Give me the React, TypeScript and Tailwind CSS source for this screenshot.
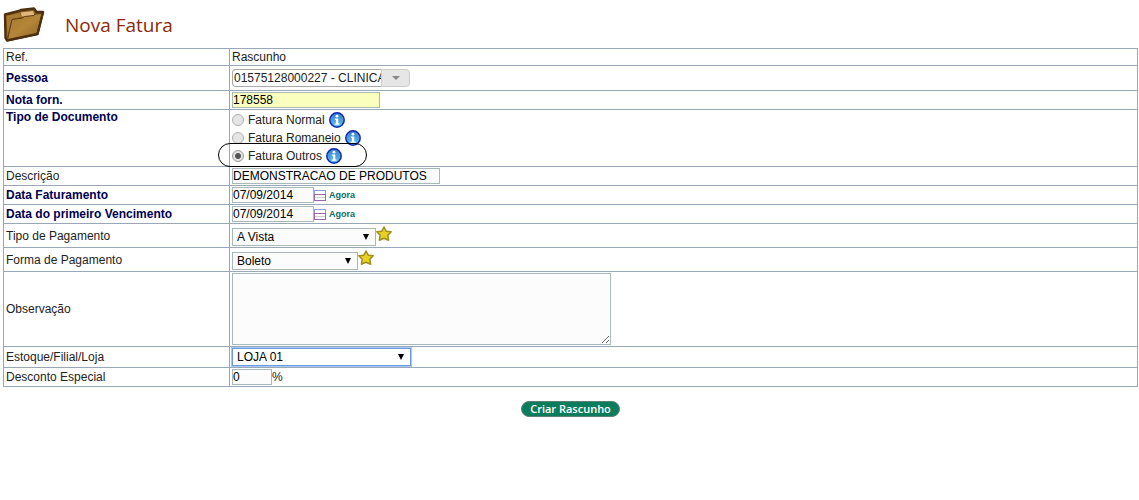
import { useState } from 'react'
import type { ReactNode } from 'react'

const inputClass =
  'block h-4 border border-[#a9b8b8] bg-[#fcfcfc] text-[12px] leading-[14px] text-black outline-none'

function FolderIcon() {
  return (
    <svg width="42" height="36" viewBox="0 0 42 36" className="block shrink-0" aria-hidden="true">
      <defs>
        <linearGradient id="folder" x1="0" y1="0" x2="1" y2="1">
          <stop offset="0" stopColor="#a37a30" />
          <stop offset="0.5" stopColor="#b38639" />
          <stop offset="1" stopColor="#8f6424" />
        </linearGradient>
      </defs>
      <path d="M2 7.5 L16 4 L18 3 L31 1.5 L33.5 5 L40 5 L34.5 27 L4 33.5 L2.5 31 Z" fill="#8a5f22" stroke="#4e2f0f" strokeWidth="2.4" strokeLinejoin="round" />
      <path d="M17.5 5.5 L30 4 L31.5 8 L30 9 L19 9.5 Z" fill="#e2b77c" />
      <path d="M3.5 9 L16 6 L19 9.5 L9 12 L4.5 29 Z" fill="#a87a32" />
      <path d="M9 12.5 L19.5 11 L21.5 9.5 L31 8.5 L32 7 L39 6.5 L34 26.5 L4.5 32.5 Z" fill="url(#folder)" stroke="#5c3a14" strokeWidth="1" strokeLinejoin="round" />
      <path d="M4 33.5 L34.5 27 L40 5" fill="none" stroke="#4e2f0f" strokeWidth="2.2" strokeLinejoin="round" />
    </svg>
  )
}

function InfoIcon() {
  return (
    <svg width="16" height="16" viewBox="0 0 16 16" className="block shrink-0" aria-hidden="true">
      <defs>
        <linearGradient id="info" x1="0" y1="0" x2="0" y2="1">
          <stop offset="0" stopColor="#3b7fc8" />
          <stop offset="1" stopColor="#5cc0ee" />
        </linearGradient>
      </defs>
      <circle cx="8" cy="8" r="7.2" fill="url(#info)" stroke="#1226b4" strokeWidth="1.5" />
      <circle cx="8" cy="4.2" r="1.4" fill="#fff" />
      <path d="M5.8 6.4 H9.3 V11.4 H10.6 V12.8 H5.6 V11.4 H6.9 V7.8 H5.8 Z" fill="#fff" />
    </svg>
  )
}

function StarIcon() {
  return (
    <svg width="16" height="16" viewBox="0 0 16 16" className="block" aria-hidden="true">
      <path
        d="M8 1 L10.2 5.2 L15.2 5.8 L11.8 9.3 L12.6 14.2 L8 12.2 L3.4 14.2 L4.2 9.3 L0.8 5.8 L5.8 5.2 Z"
        fill="#e6d321"
        stroke="#a08c20"
        strokeWidth="1.5"
        strokeLinejoin="round"
      />
    </svg>
  )
}

function CalendarIcon() {
  return (
    <svg width="12" height="12" viewBox="0 0 12 12" className="block" shapeRendering="crispEdges" aria-hidden="true">
      <rect x="0" y="1" width="12" height="10" fill="#fff" />
      <path d="M0 1.5 H12 M0.5 1 V5 M11.5 1 V5" stroke="#8f9fe0" />
      <path d="M1 8.5 H11" stroke="#d3cbd0" />
      <path d="M0 5.5 H12 M0 11.5 H12 M0.5 5 V12 M11.5 5 V12" stroke="#9a68aa" />
    </svg>
  )
}

type RowProps = {
  label: string
  htmlFor?: string
  required?: boolean
  top?: boolean
  height: string
  children: ReactNode
}

function Row({ label, htmlFor, required, top, height, children }: RowProps) {
  return (
    <tr className={height}>
      <th
        scope="row"
        className={`w-[226px] border border-[#98a8b8] p-0 pl-0.5 text-left ${
          top ? 'align-top' : 'align-middle'
        } ${required ? 'font-bold text-[#000050]' : 'font-normal text-[#222]'}`}
      >
        {htmlFor ? <label htmlFor={htmlFor}>{label}</label> : label}
      </th>
      <td className="border border-[#98a8b8] p-0 pl-0.5 align-middle">{children}</td>
    </tr>
  )
}

type SelectProps = {
  id: string
  width: string
  options: string[]
  focused?: boolean
}

function Select({ id, width, options, focused }: SelectProps) {
  return (
    <div className={`relative ${width}`}>
      <select
        id={id}
        className={`block h-[18px] w-full appearance-none border pl-1 text-[12px] leading-4 text-black outline-none ${
          focused
            ? 'border-[#6a9ae0] bg-white ring-1 ring-[#a9c8f5]'
            : 'border-[#a9b8b8] bg-[#fcfcfc]'
        }`}
      >
        {options.map(option => (
          <option key={option}>{option}</option>
        ))}
      </select>
      <svg width="6" height="6" viewBox="0 0 6 6" className="pointer-events-none absolute top-1.5 right-[7px]" aria-hidden="true">
        <path d="M0 0 H6 L3 6 Z" fill="#000" />
      </svg>
    </div>
  )
}

function DateField({ id }: { id: string }) {
  const [value, setValue] = useState('07/09/2014')
  return (
    <div className="flex items-center">
      <input id={id} type="text" value={value} onChange={e => setValue(e.target.value)} className={`${inputClass} w-[82px]`} />
      <button type="button" aria-label="Calendário">
        <CalendarIcon />
      </button>
      <a href="#agora" className="ml-[3px] text-[9px] leading-3 font-bold text-[#0b6b5f]">
        Agora
      </a>
    </div>
  )
}

const documentTypes = ['Fatura Normal', 'Fatura Romaneio', 'Fatura Outros']

export default function App() {
  const [documentType, setDocumentType] = useState('Fatura Outros')

  return (
    <main className="min-h-screen bg-white pr-px pl-[3px] font-['Liberation_Sans',Arial,sans-serif] text-[12px] leading-[14px] text-[#222]">
      <header className="flex h-12 items-center gap-5 pt-0.5">
        <FolderIcon />
        <h1 className="font-['Trebuchet_MS','Open_Sans',sans-serif] text-[19px] leading-6 text-[#8b2a08]">Nova Fatura</h1>
      </header>

      <form onSubmit={e => e.preventDefault()}>
        <table className="w-full table-fixed border-collapse">
          <tbody>
            <Row label="Ref." height="h-[17px]">
              Rascunho
            </Row>
            <Row label="Pessoa" htmlFor="pessoa" required height="h-[25px]">
              <div className="flex h-[18px] w-[178px]">
                <input
                  id="pessoa"
                  type="text"
                  defaultValue="01575128000227 - CLINICA"
                  className="h-full w-[149px] rounded-l border border-r-0 border-[#aaa] bg-white pl-px text-[12px] text-[#222] outline-none"
                />
                <button
                  type="button"
                  aria-label="Abrir lista"
                  className="flex h-full flex-1 items-center justify-center rounded-r border border-[#ccc] bg-[#e6e6e6]"
                >
                  <svg width="8" height="4" viewBox="0 0 8 4" aria-hidden="true">
                    <path d="M0 0 H8 L4 4 Z" fill="#888" />
                  </svg>
                </button>
              </div>
            </Row>
            <Row label="Nota forn." htmlFor="nota" required height="h-[19px]">
              <input
                id="nota"
                type="text"
                defaultValue="178558"
                className="block h-4 w-[148px] border border-[#a9b8b8] bg-[#faffbd] text-[12px] leading-[14px] text-black outline-none"
              />
            </Row>
            <Row label="Tipo de Documento" required top height="h-[57px]">
              <div className="relative">
                {documentTypes.map(type => (
                  <div key={type} className="flex h-[18px] items-center gap-1">
                    <label className="flex items-center gap-1">
                      <input
                        type="radio"
                        name="tipo-documento"
                        checked={documentType === type}
                        onChange={() => setDocumentType(type)}
                        className="size-3 appearance-none rounded-full border border-[#b0b0b0] bg-[#e4e4e4] checked:border-[#999] checked:bg-[radial-gradient(circle,#555_0_2.5px,#e4e4e4_3.5px)]"
                      />
                      {type}
                    </label>
                    <InfoIcon />
                  </div>
                ))}
                <div className="pointer-events-none absolute -bottom-0.5 -left-3.5 h-6 w-[149px] rounded-xl border border-black" />
              </div>
            </Row>
            <Row label="Descrição" htmlFor="descricao" height="h-[19px]">
              <input id="descricao" type="text" defaultValue="DEMONSTRACAO DE PRODUTOS" className={`${inputClass} w-[208px]`} />
            </Row>
            <Row label="Data Faturamento" htmlFor="data-faturamento" required height="h-[19px]">
              <DateField id="data-faturamento" />
            </Row>
            <Row label="Data do primeiro Vencimento" htmlFor="data-vencimento" required height="h-[19px]">
              <DateField id="data-vencimento" />
            </Row>
            <Row label="Tipo de Pagamento" htmlFor="tipo-pagamento" height="h-[24px]">
              <div className="flex h-5 items-start">
                <div className="self-end">
                  <Select id="tipo-pagamento" width="w-[144px]" options={['A Vista', 'A Prazo']} />
                </div>
                <StarIcon />
              </div>
            </Row>
            <Row label="Forma de Pagamento" htmlFor="forma-pagamento" height="h-[24px]">
              <div className="flex h-5 items-start">
                <div className="self-end">
                  <Select id="forma-pagamento" width="w-[126px]" options={['Boleto', 'Dinheiro']} />
                </div>
                <StarIcon />
              </div>
            </Row>
            <Row label="Observação" htmlFor="observacao" height="h-[75px]">
              <textarea
                id="observacao"
                className="block h-[72px] w-[379px] border border-[#a9b8b8] bg-[#fcfcfc] p-0.5 text-[12px] leading-[14px] outline-none"
              />
            </Row>
            <Row label="Estoque/Filial/Loja" htmlFor="estoque" height="h-[21px]">
              <Select id="estoque" width="w-[179px]" options={['LOJA 01', 'LOJA 02']} focused />
            </Row>
            <Row label="Desconto Especial" htmlFor="desconto" height="h-[19px]">
              <div className="flex items-center">
                <input id="desconto" type="text" defaultValue="0" className={`${inputClass} w-10`} />%
              </div>
            </Row>
          </tbody>
        </table>

        <div className="flex justify-center pt-3.5">
          <button
            type="submit"
            className="h-4 rounded-full border border-[#5f7f74] bg-[#0c7d5c] px-2 font-['Open_Sans',sans-serif] text-[11px] leading-3 font-semibold text-white"
          >
            Criar Rascunho
          </button>
        </div>
      </form>
    </main>
  )
}
